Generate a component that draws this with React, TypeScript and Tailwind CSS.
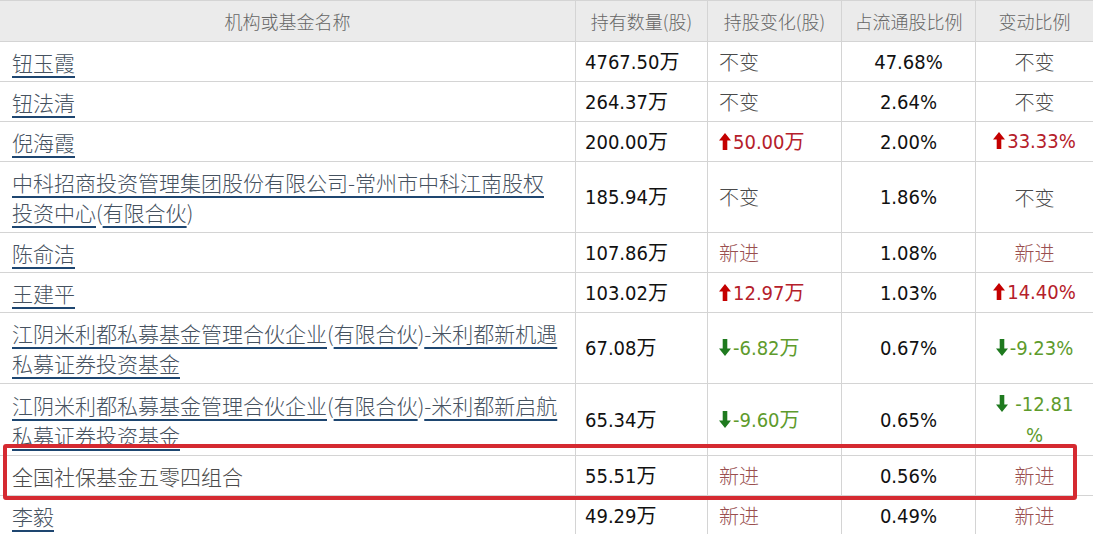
import React from "react";

type Change = { kind: "same" } | { kind: "new" } | { kind: "up" | "down"; text: string; wrap?: string };

type Row = {
  name: string[];
  link: boolean;
  held: string;
  change: Change;
  ratio: string;
  pct: Change;
  h: string;
};

const rows: Row[] = [
  { name: ["钮玉霞"], link: true, held: "4767.50万", change: { kind: "same" }, ratio: "47.68%", pct: { kind: "same" }, h: "h-[40px]" },
  { name: ["钮法清"], link: true, held: "264.37万", change: { kind: "same" }, ratio: "2.64%", pct: { kind: "same" }, h: "h-[40px]" },
  { name: ["倪海霞"], link: true, held: "200.00万", change: { kind: "up", text: "50.00万" }, ratio: "2.00%", pct: { kind: "up", text: "33.33%" }, h: "h-[40px]" },
  {
    name: ["中科招商投资管理集团股份有限公司-常州市中科江南股权", "投资中心(有限合伙)"],
    link: true,
    held: "185.94万",
    change: { kind: "same" },
    ratio: "1.86%",
    pct: { kind: "same" },
    h: "h-[71px]",
  },
  { name: ["陈俞洁"], link: true, held: "107.86万", change: { kind: "new" }, ratio: "1.08%", pct: { kind: "new" }, h: "h-[40px]" },
  { name: ["王建平"], link: true, held: "103.02万", change: { kind: "up", text: "12.97万" }, ratio: "1.03%", pct: { kind: "up", text: "14.40%" }, h: "h-[40px]" },
  {
    name: ["江阴米利都私募基金管理合伙企业(有限合伙)-米利都新机遇", "私募证券投资基金"],
    link: true,
    held: "67.08万",
    change: { kind: "down", text: "-6.82万" },
    ratio: "0.67%",
    pct: { kind: "down", text: "-9.23%" },
    h: "h-[71px]",
  },
  {
    name: ["江阴米利都私募基金管理合伙企业(有限合伙)-米利都新启航", "私募证券投资基金"],
    link: true,
    held: "65.34万",
    change: { kind: "down", text: "-9.60万" },
    ratio: "0.65%",
    pct: { kind: "down", text: " -12.81", wrap: "%" },
    h: "h-[72px]",
  },
  { name: ["全国社保基金五零四组合"], link: false, held: "55.51万", change: { kind: "new" }, ratio: "0.56%", pct: { kind: "new" }, h: "h-[40px]" },
  { name: ["李毅"], link: true, held: "49.29万", change: { kind: "new" }, ratio: "0.49%", pct: { kind: "new" }, h: "h-[40px]" },
];

const cjk = "font-['Noto_Sans_CJK_SC',sans-serif] font-light";
const num = "font-['DejaVu_Sans_Condensed','DejaVu_Sans','Noto_Sans_CJK_SC',sans-serif]";

function Arrow({ up }: { up: boolean }) {
  return (
    <svg width="12" height="17" viewBox="0 0 12 17" className="inline-block mr-[2px] align-[-1px]">
      {up ? (
        <path d="M6 0 L12 7.5 L8.3 7.5 L8.3 17 L3.7 17 L3.7 7.5 L0 7.5 Z" fill="#c40000" />
      ) : (
        <path d="M6 17 L12 9.5 L8.3 9.5 L8.3 0 L3.7 0 L3.7 9.5 L0 9.5 Z" fill="#1f7a1f" />
      )}
    </svg>
  );
}

function ChangeView({ c }: { c: Change }) {
  if (c.kind === "same") return <span className={`${cjk} text-[#4a4a4a]`}>不变</span>;
  if (c.kind === "new") return <span className={`${cjk} text-[#9a4f4f]`}>新进</span>;
  const up = c.kind === "up";
  return (
    <span className={`${num} whitespace-pre ${up ? "text-[#b5202a]" : "text-[#5e9b2c]"}`}>
      <Arrow up={up} />
      {c.text}
      {c.wrap && (
        <>
          <br />
          {c.wrap}
        </>
      )}
    </span>
  );
}

function NameLine({ text, link }: { text: string; link: boolean }) {
  if (!link) return <span className="text-[#4a4a4a]">{text}</span>;
  const parts = text.split(/([()])/).filter(Boolean);
  return (
    <>
      {parts.map((p, i) =>
        p === "(" || p === ")" ? (
          <span key={i} className="text-[#46525f]">
            {p}
          </span>
        ) : (
          <span
            key={i}
            className="text-[#46525f] underline decoration-[#1e4670] decoration-2 underline-offset-[5px]"
          >
            {p}
          </span>
        )
      )}
    </>
  );
}

export default function App() {
  return (
    <div className="relative w-[1093px] h-[534px] overflow-hidden bg-white">
      <div className="border-t border-[#d4d4d4]">
        <div className={`flex h-[41px] bg-[#ebebeb] border-b border-[#d4d4d4] text-[18px] text-[#666] ${cjk}`}>
          <div className="w-[576px] border-r border-[#d4d4d4] flex items-center justify-center">机构或基金名称</div>
          <div className="w-[132px] border-r border-[#d4d4d4] flex items-center justify-center">持有数量(股)</div>
          <div className="w-[134px] border-r border-[#d4d4d4] flex items-center justify-center">持股变化(股)</div>
          <div className="w-[134px] border-r border-[#d4d4d4] flex items-center justify-center">占流通股比例</div>
          <div className="flex-1 flex items-center justify-center">变动比例</div>
        </div>
        {rows.map((r, i) => (
          <div key={i} className={`flex ${r.h} border-b border-[#d4d4d4] text-[20px]`}>
            <div className={`w-[576px] border-r border-[#d4d4d4] pl-[12px] flex flex-col justify-center text-[21px] leading-[30px] ${cjk}`}>
              {r.name.map((line, j) => (
                <div key={j} className="whitespace-nowrap">
                  <NameLine text={line} link={r.link} />
                </div>
              ))}
            </div>
            <div className={`w-[132px] border-r border-[#d4d4d4] pl-[9px] flex items-center text-[#111] ${num}`}>{r.held}</div>
            <div className="w-[134px] border-r border-[#d4d4d4] pl-[11px] flex items-center">
              <ChangeView c={r.change} />
            </div>
            <div className={`w-[134px] border-r border-[#d4d4d4] flex items-center justify-center text-[#111] ${num}`}>{r.ratio}</div>
            <div className="flex-1 flex items-center justify-center text-center leading-[31px]">
              <ChangeView c={r.pct} />
            </div>
          </div>
        ))}
      </div>
      <div className="absolute left-[3px] top-[444px] w-[1074px] h-[56px] border-4 border-[#d52a31] rounded-[3px]" />
    </div>
  );
}
